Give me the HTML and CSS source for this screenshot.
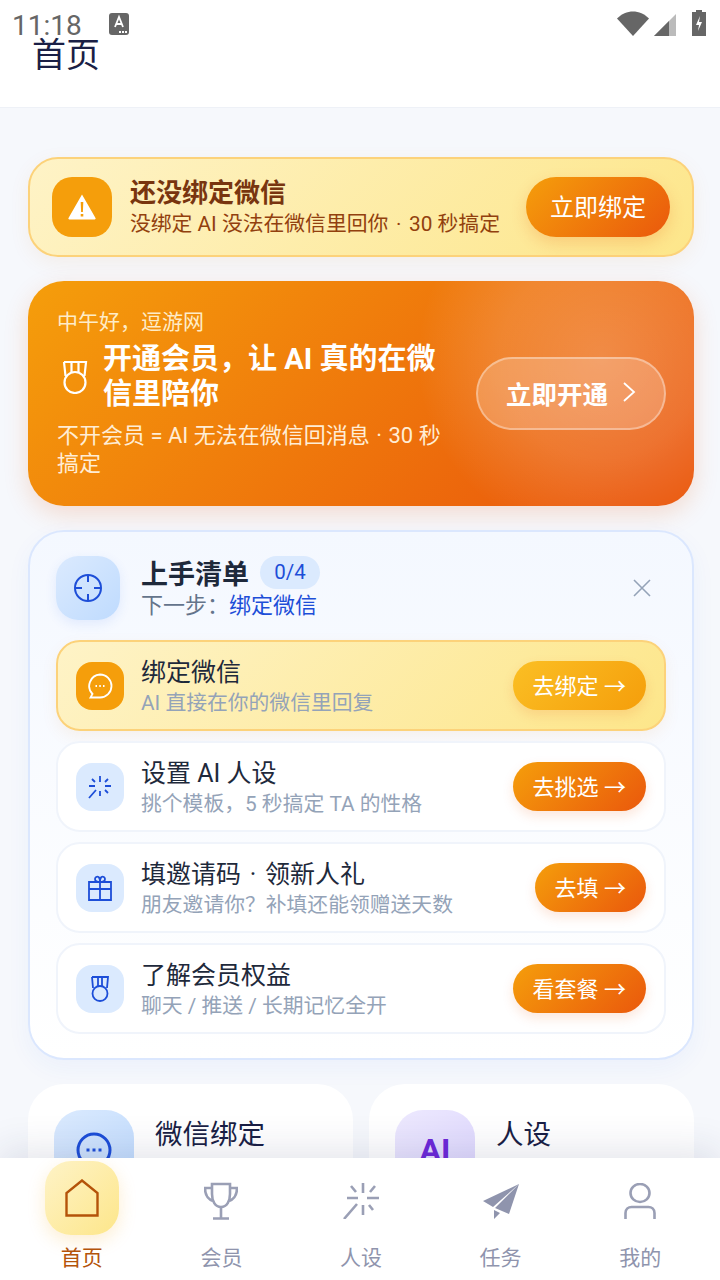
FILE: index.html
```html
<!DOCTYPE html>
<html lang="zh-CN">
<head>
  <meta charset="UTF-8" />
  <title>首页</title>
  <meta name="viewport" content="width=device-width, initial-scale=1.0" />
  <link rel="stylesheet" href="styles.css">
</head>
<body>
<div class="app">

  <!-- Status bar -->
  <div class="status">
    <span class="clock">11:18</span>
    <svg class="st-a" width="20" height="22" viewBox="0 0 20 22"><rect width="20" height="22" rx="3" fill="#666"/><path d="M6 14 10 4l4 10M7.5 11h5" fill="none" stroke="#fff" stroke-width="1.8"/><path d="M10 18h2v2h-2zM13 18h2v2h-2zM16 18h2v2h-2z" fill="#fff"/></svg>
    <svg class="st-wifi" width="32" height="25" viewBox="0 0 32 25"><path d="M0 7.5C9-2 23-2 32 7.5L16 25z" fill="#666"/></svg>
    <svg class="st-signal" width="22" height="22" viewBox="0 0 22 22"><path d="M22 0v22H0z" fill="#bbb"/><path d="M15 7v15H0z" fill="#666"/></svg>
    <svg class="st-batt" width="14" height="26" viewBox="0 0 14 26"><path d="M4 0h6v2h4v24H0V2h4z" fill="#666"/><path d="M8 6 4 15h3l-1 6 4-9H7z" fill="#fff"/></svg>
  </div>

  <!-- Header -->
  <div class="header"><h1>首页</h1></div>

  <div class="main">

    <!-- Bind banner -->
    <div class="banner">
      <div class="banner-icon">
        <svg width="30" height="28" viewBox="0 0 30 28"><path d="M15 1.500 28.500 25a1 1 0 0 1-1 1.500h-25a1 1 0 0 1-1-1.500z" fill="#fff"/><path d="M13.700 9h2.600l-.4 10h-1.800zM13.700 21h2.600v2.600h-2.600z" fill="#f59e0b"/></svg>
      </div>
      <div class="banner-text">
        <div class="banner-title">还没绑定微信</div>
        <div class="banner-sub">没绑定 AI 没法在微信里回你 <span class="dot">·</span> 30 秒搞定</div>
      </div>
      <div class="btn banner-btn">立即绑定</div>
    </div>

    <!-- Hero -->
    <div class="hero">
      <div class="hero-left">
        <div class="hero-hi">中午好，逗游网</div>
        <div class="hero-head">
          <svg width="26" height="34" viewBox="0 0 26 34" fill="none" stroke="#fff" stroke-width="2.200"><path d="M2 2h22l-1.500 14M2 2l1.500 14M9.500 2v10M16.500 2v10"/><ellipse cx="13" cy="22.500" rx="10.500" ry="10.500"/></svg>
          <div class="hero-title">开通会员，让 AI 真的在微信里陪你</div>
        </div>
        <div class="hero-sub">不开会员 = AI 无法在微信回消息 <span class="dot dot-sm">·</span> 30 秒搞定</div>
      </div>
      <div class="hero-btn">立即开通
        <svg width="14" height="22" viewBox="0 0 14 22" fill="none" stroke="#fff" stroke-width="1.800"><path d="M2 2l10 9-10 9"/></svg>
      </div>
    </div>

    <!-- Checklist -->
    <div class="checklist">
      <div class="cl-head">
        <div class="cl-icon">
          <svg width="30" height="30" viewBox="0 0 30 30" fill="none" stroke="#1d4ed8" stroke-width="2"><circle cx="15" cy="15" r="13"/><path d="M15 2v7M15 21v7M2 15h7M21 15h7"/></svg>
        </div>
        <div class="cl-titles">
          <div class="cl-title-row"><span class="cl-title">上手清单</span><span class="cl-badge">0/4</span></div>
          <div class="cl-next">下一步：<span class="cl-link">绑定微信</span></div>
        </div>
        <svg class="cl-close" width="20" height="20" viewBox="0 0 20 20" stroke="#94a3b8" stroke-width="1.600"><path d="M2 2l16 16M18 2 2 18"/></svg>
      </div>

      <div class="item item-on">
        <div class="item-icon icon-amber">
          <svg width="26" height="26" viewBox="0 0 26 26" fill="none" stroke="#fff" stroke-width="1.800"><path d="M13 1.500a11.500 11.500 0 0 1 0 23H3.500l2-3.500A11.500 11.500 0 0 1 13 1.500z"/><path d="M8.500 13h1.500M12.300 13h1.500M16 13h1.500"/></svg>
        </div>
        <div class="item-text">
          <div class="item-title">绑定微信</div>
          <div class="item-sub">AI 直接在你的微信里回复</div>
        </div>
        <div class="btn item-btn btn-amber">去绑定 →</div>
      </div>

      <div class="item">
        <div class="item-icon">
          <svg width="24" height="24" viewBox="0 0 24 24" fill="none" stroke="#1d4ed8" stroke-width="1.800"><path d="M12 1v6M12 16v5M1 11h6M17 11h6M4 4l3 3M20 4l-3 3M17 15l3 3M1 23l7-8"/></svg>
        </div>
        <div class="item-text">
          <div class="item-title">设置 AI 人设</div>
          <div class="item-sub">挑个模板，5 秒搞定 TA 的性格</div>
        </div>
        <div class="btn item-btn">去挑选 →</div>
      </div>

      <div class="item">
        <div class="item-icon">
          <svg width="24" height="26" viewBox="0 0 24 26" fill="none" stroke="#1d4ed8" stroke-width="1.800"><path d="M1 7h22v18H1zM1 14h22M12 7v18"/><path d="M12 7C8 7 7 5.500 7 4s2-3 3.500-2S12 5 12 7zM12 7c4 0 5-1.500 5-3s-2-3-3.500-2S12 5 12 7z"/></svg>
        </div>
        <div class="item-text">
          <div class="item-title">填邀请码 <span class="dot">·</span> 领新人礼</div>
          <div class="item-sub">朋友邀请你？补填还能领赠送天数</div>
        </div>
        <div class="btn item-btn">去填 →</div>
      </div>

      <div class="item">
        <div class="item-icon">
          <svg width="18" height="26" viewBox="0 0 18 26" fill="none" stroke="#1d4ed8" stroke-width="1.800"><path d="M1 1h16l-1 11M1 1l1 11M7 1v9M11 1v9"/><ellipse cx="9" cy="17.500" rx="7.500" ry="7.500"/></svg>
        </div>
        <div class="item-text">
          <div class="item-title">了解会员权益</div>
          <div class="item-sub">聊天 / 推送 / 长期记忆全开</div>
        </div>
        <div class="btn item-btn">看套餐 →</div>
      </div>
    </div>

    <!-- Feature cards -->
    <div class="cards">
      <div class="card">
        <div class="card-icon ci-blue">
          <svg width="36" height="36" viewBox="0 0 36 36" fill="none" stroke="#1d4ed8" stroke-width="3"><circle cx="18" cy="18" r="16"/><path d="M10.500 18h3M16.500 18h3M22.500 18h3"/></svg>
        </div>
        <div class="card-title">微信绑定</div>
      </div>
      <div class="card">
        <div class="card-icon ci-purple">AI</div>
        <div class="card-title">人设</div>
      </div>
    </div>
  </div>

  <!-- Tab bar -->
  <div class="tabbar">
    <div class="tab tab-on">
      <div class="tab-pill">
        <svg width="34" height="38" viewBox="0 0 34 38" fill="none" stroke="#b45309" stroke-width="2.400"><path d="M1.500 36.500V14L17 1.500 32.500 14v22.500z"/></svg>
      </div>
      <span>首页</span>
    </div>
    <div class="tab">
      <div class="tab-pill">
        <svg class="tab-svg" width="34" height="38" viewBox="0 0 34 38" fill="none" stroke="#9a9fb5" stroke-width="2.600"><path d="M8 2h18v10c0 7-3 13-9 13S8 19 8 12z"/><path d="M8 6H1c0 6 2 11 8 13M26 6h7c0 6-2 11-8 13M17 25v11M9 36.500h16"/></svg>
      </div>
      <span>会员</span>
    </div>
    <div class="tab">
      <div class="tab-pill">
        <svg class="tab-svg" width="36" height="36" viewBox="0 0 36 36" fill="none" stroke="#9a9fb5" stroke-width="2.600"><path d="M20 0v10M20 22v10M4 15h11M24 15h12M8 3l5 6M32 3l-5 6M26 22l4 5M14 21 1 36"/></svg>
      </div>
      <span>人设</span>
    </div>
    <div class="tab">
      <div class="tab-pill">
        <svg class="tab-svg" width="36" height="36" viewBox="0 0 36 36"><path d="M36 1 0 18l10 6zM36 1 12 25l14 6zM11 27v9l6-6z" fill="#8f94ad"/></svg>
      </div>
      <span>任务</span>
    </div>
    <div class="tab">
      <div class="tab-pill">
        <svg class="tab-svg" width="32" height="36" viewBox="0 0 32 36" fill="none" stroke="#9a9fb5" stroke-width="2.600"><ellipse cx="16" cy="10" rx="9.500" ry="9"/><path d="M1.500 36v-6c0-4 3-6 6-6h17c3 0 6 2 6 6v6"/></svg>
      </div>
      <span>我的</span>
    </div>
  </div>
</div>
</body>
</html>
```

FILE: styles.css
```css
* { box-sizing:border-box; }
html, body { margin:0; }
body { font-family:Roboto, "Noto Sans CJK SC", sans-serif; color:#1e293b; }

.app { position:relative; width:720px; height:1280px; overflow:hidden; background:#f6f8fc; }

/* status bar */
.status { position:absolute; top:0; left:0; width:100%; height:40px; z-index:5; }
.status svg { position:absolute; }
.clock { position:absolute; left:12px; top:8px; font:28px/36px Roboto, sans-serif; color:#666; }
.st-a { left:109px; top:13px; }
.st-wifi { left:617px; top:11px; }
.st-signal { left:654px; top:14px; }
.st-batt { left:692px; top:10px; }

.header { background:#fff; height:108px; padding:32px 32px 0; border-bottom:1px solid #eef1f7; }
.header h1 { margin:0; font-size:34px; line-height:46px; font-weight:400; color:#1a1f45; }

.main { display:flex; flex-direction:column; gap:24px; padding:49px 26px 0 28px; }

.btn { display:flex; align-items:center; justify-content:center; color:#fff; background:linear-gradient(135deg,#f59e0b,#ea580c); padding-bottom:3px; }
.dot { margin:0 2.500px; }
.dot-sm { margin:0 1px; }

/* banner */
.banner { display:flex; align-items:center; height:100px; padding:0 22px; border:2px solid #fcd27a; border-radius:30px; background:linear-gradient(135deg,#fef3c7,#fde68a); box-shadow:0 6px 20px rgba(217,119,6,.08); }
.banner-icon { flex:none; display:flex; align-items:center; justify-content:center; width:60px; height:60px; border-radius:20px; background:#f59e0b; }
.banner-text { flex:1; margin-left:18px; }
.banner-title { font-size:26px; line-height:34px; font-weight:700; color:#78350f; }
.banner-sub { font-size:20.800px; line-height:28px; color:#92400e; white-space:nowrap; }
.banner-btn { flex:none; width:144px; height:60px; border-radius:30px; font-size:24px; box-shadow:0 6px 16px rgba(234,88,12,.2); }

/* hero */
.hero { display:flex; align-items:center; height:225px; padding:0 28px 0 29px; border-radius:36px; background:radial-gradient(circle at 86% 34%,rgba(255,255,255,.24),rgba(255,255,255,.15) 17%,rgba(255,255,255,0) 31%),linear-gradient(135deg,#f59e0b,#ea580c 92%); box-shadow:0 8px 24px rgba(234,88,12,.18); color:#fff; }
.hero-left { width:390px; margin-bottom:2px; }
.hero-hi { font-size:21px; line-height:28px; color:#feecc8; }
.hero-head { display:flex; align-items:center; gap:15px; margin:6px 0 10px 5px; }
.hero-head svg { flex:none; }
.hero-title { font-size:29px; line-height:35px; font-weight:700; }
.hero-sub { font-size:22px; line-height:28px; color:#ffedd5; }
.hero-btn { flex:none; display:flex; align-items:center; justify-content:center; gap:14px; width:190px; height:73px; margin-left:auto; padding-bottom:3px; border:2px solid rgba(255,255,255,.35); border-radius:37px; background:rgba(255,255,255,.2); font-size:25.500px; font-weight:700; }

/* checklist */
.checklist { display:flex; flex-direction:column; gap:10px; height:530px; padding:24px 26px; border:2px solid #dbe7fe; border-radius:36px; background:linear-gradient(180deg,#f4f8ff,#fff); box-shadow:0 8px 24px rgba(37,99,235,.05); }
.cl-head { display:flex; align-items:center; height:64px; margin-bottom:10px; }
.cl-icon { flex:none; display:flex; align-items:center; justify-content:center; width:64px; height:64px; border-radius:22px; background:linear-gradient(135deg,#dbeafe,#bfdbfe); box-shadow:0 4px 12px rgba(37,99,235,.1); }
.cl-titles { flex:1; margin-left:21px; }
.cl-title-row { display:flex; align-items:center; gap:11px; height:35px; }
.cl-title { font-size:27px; font-weight:700; color:#1e293b; }
.cl-badge { width:60px; height:33px; border-radius:17px; background:#dbeafe; color:#1d4ed8; font-size:20.500px; line-height:33px; text-align:center; }
.cl-next { font-size:22px; line-height:31px; color:#64748b; }
.cl-link { color:#1d4ed8; }
.cl-close { flex:none; margin-right:14px; }

.item { display:flex; align-items:center; height:91px; padding:0 18px; border:2px solid #f0f4fb; border-radius:24px; background:#fff; }
.item-on { border-color:#fcd27a; background:linear-gradient(135deg,#fef3c7,#fde68a); box-shadow:0 6px 16px rgba(217,119,6,.08); }
.item-icon { flex:none; display:flex; align-items:center; justify-content:center; width:48px; height:48px; border-radius:16px; background:#dbeafe; }
.icon-amber { background:#f59e0b; }
.item-text { flex:1; margin-left:17px; padding-top:3px; }
.item-title { font-size:25px; line-height:32px; color:#1e293b; white-space:nowrap; }
.item-sub { font-size:20.800px; line-height:28px; color:#94a3b8; white-space:nowrap; }
.item-btn { flex:none; padding:0 20px 3px; height:49px; border-radius:25px; font-size:22px; box-shadow:0 5px 12px rgba(234,88,12,.15); white-space:nowrap; }
.btn-amber { background:linear-gradient(135deg,#fbbf24,#f59e0b); }

/* feature cards */
.cards { display:grid; grid-template-columns:325px 325px; gap:16px; }
.card { display:flex; align-items:flex-start; height:200px; padding:26px; border-radius:36px; background:#fff; }
.card-icon { flex:none; display:flex; align-items:center; justify-content:center; width:80px; height:80px; border-radius:28px; }
.ci-blue { background:linear-gradient(135deg,#dbeafe,#bfdbfe); }
.ci-purple { background:linear-gradient(135deg,#ede9fe,#ddd6fe); color:#6d28d9; font-size:32px; font-weight:700; }
.card-title { margin-left:21px; font-size:27.500px; line-height:50px; color:#1a1f45; }

/* tab bar */
.tabbar { position:absolute; left:0; bottom:0; display:flex; width:100%; height:122px; padding:3px 10px 0 12px; background:#fff; box-shadow:0 -8px 36px rgba(30,40,90,.12); }
.tab { flex:1; display:flex; flex-direction:column; align-items:center; color:#8f94ad; font-size:21px; }
.tab span { margin-top:8px; line-height:30px; }
.tab-pill { display:flex; align-items:center; justify-content:center; width:74px; height:74px; border-radius:26px; }
.tab-svg { margin-top:6px; }
.tab-on .tab-pill { background:linear-gradient(135deg,#fef3c7,#fde68a); box-shadow:0 6px 18px rgba(245,158,11,.18); }
.tab-on { color:#b45309; }
```
